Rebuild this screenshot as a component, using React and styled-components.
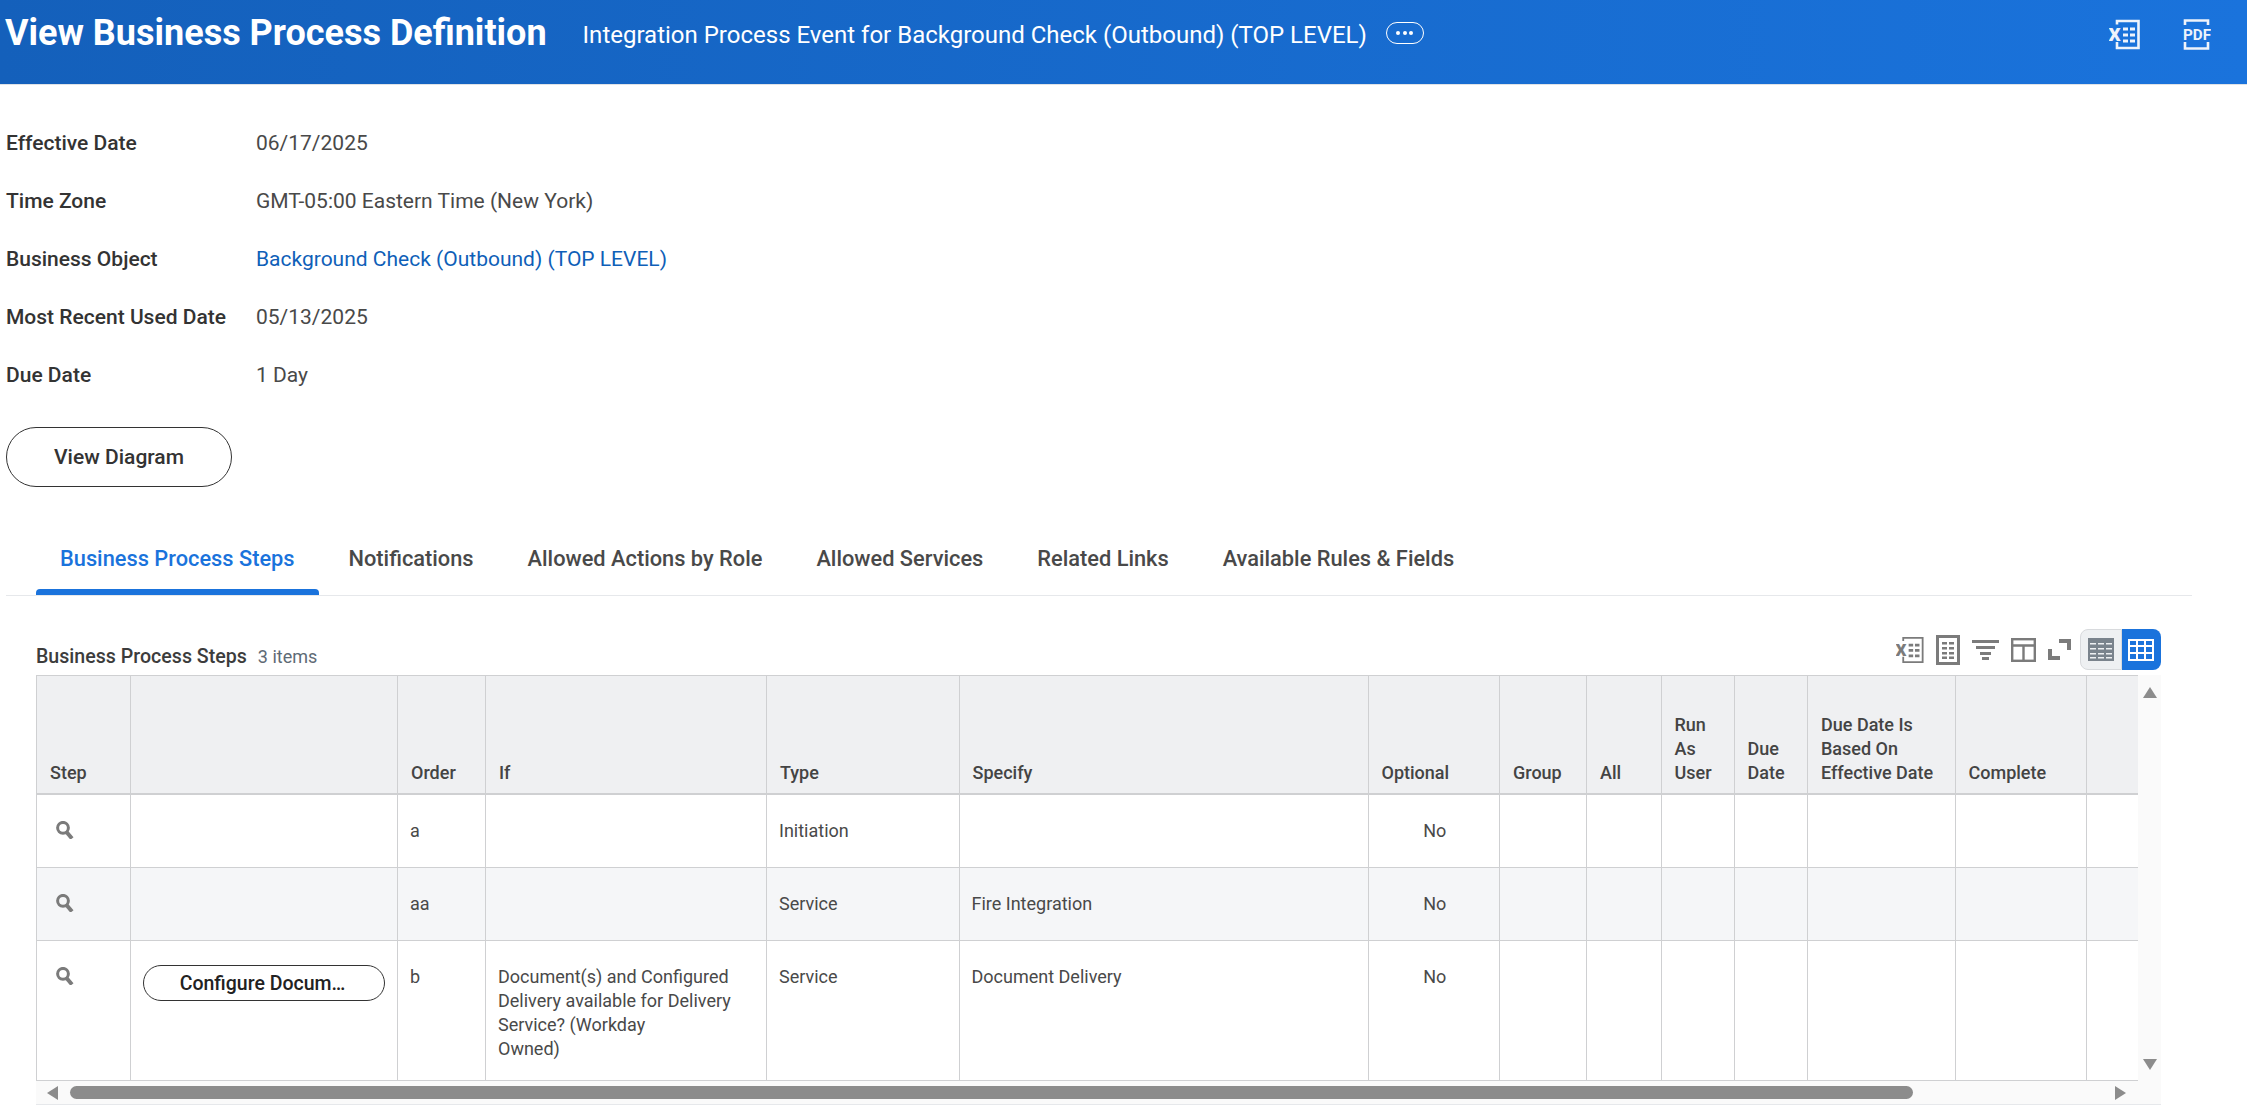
import styled, { createGlobalStyle } from "styled-components";

const GlobalStyle = createGlobalStyle`
  html, body {
    margin: 0;
    padding: 0;
    background: #fff;
    overflow: hidden;
  }
  body {
    font-family: Roboto, "Liberation Sans", sans-serif;
    color: #333;
  }
`;

const columns = [94, 267, 88, 281, 192.5, 409, 131.5, 87, 74.5, 73, 73.5, 147.5, 131.5, 120];

const headers = [
  "Step",
  "",
  "Order",
  "If",
  "Type",
  "Specify",
  "Optional",
  "Group",
  "All",
  <>Run<br />As<br />User</>,
  <>Due<br />Date</>,
  <>Due Date Is<br />Based On<br />Effective Date</>,
  "Complete",
  "",
];

const rows = [
  { order: "a", type: "Initiation", specify: "", rowHeight: 74 },
  { order: "aa", type: "Service", specify: "Fire Integration", rowHeight: 73, striped: true },
  {
    order: "b",
    type: "Service",
    specify: "Document Delivery",
    rowHeight: 140,
    button: "Configure Docum…",
    condition: (
      <>
        Document(s) and Configured<br />
        Delivery available for Delivery<br />
        Service? (Workday<br />
        Owned)
      </>
    ),
  },
];

const tabs = [
  "Business Process Steps",
  "Notifications",
  "Allowed Actions by Role",
  "Allowed Services",
  "Related Links",
  "Available Rules & Fields",
];

const ExcelIcon = ({ color, size = 30, stroke = 2.6 }) => (
  <svg width={size} height={size} viewBox="0 0 31 30" fill="none">
    <path d="M8 5V1.500h21.500v27H8v-6" stroke={color} strokeWidth={stroke} />
    <text x="-0.500" y="21.500" fontFamily="Roboto, sans-serif" fontWeight="900" fontSize="19" fill={color}>X</text>
    <path d="M14 8h5v3h-5zM21 8h5v3h-5zM14 14h5v3h-5zM21 14h5v3h-5zM14 20h5v3h-5zM21 20h5v3h-5z" fill={color} />
  </svg>
);

const PdfIcon = () => (
  <svg width="28" height="31" viewBox="0 0 28 31" fill="none">
    <path d="M2 6V1.500h23V6M2 23v6.500h23V23" stroke="#eef3fb" strokeWidth="2.600" />
    <text x="0" y="20.500" fontFamily="Roboto, sans-serif" fontWeight="700" fontSize="15" textLength="28" lengthAdjust="spacingAndGlyphs" fill="#eef3fb">PDF</text>
  </svg>
);

const ListIcon = () => (
  <svg width="24" height="30" viewBox="0 0 24 30" fill="none">
    <rect x="1.500" y="1.500" width="21" height="27" stroke="#7b7b7b" strokeWidth="3" />
    <path d="M6 7h5v2.500H6zM13 7h5v2.500h-5zM6 12h5v2.500H6zM13 12h5v2.500h-5zM6 17h5v2.500H6zM13 17h5v2.500h-5zM6 21.500h5V24H6zM13 21.500h5V24h-5z" fill="#7b7b7b" />
  </svg>
);

const FilterIcon = () => (
  <svg width="27" height="20" viewBox="0 0 27 20" fill="#7b7b7b">
    <rect x="0" y="0" width="27" height="3" />
    <rect x="4" y="6" width="19" height="3" />
    <rect x="8" y="12" width="11" height="3" />
    <rect x="10" y="17" width="7" height="3" />
  </svg>
);

const ColumnsIcon = () => (
  <svg width="25" height="24" viewBox="0 0 25 24" fill="none" stroke="#7b7b7b" strokeWidth="2.400">
    <rect x="1.200" y="1.200" width="22.600" height="21.600" />
    <path d="M1 7.500h23M12.500 7.500V23" />
  </svg>
);

const ExpandIcon = () => (
  <svg width="23" height="21" viewBox="0 0 23 21" fill="#7b7b7b">
    <path d="M11 0h12v11h-4V4h-8zM0 10h4v7h8v4H0z" />
  </svg>
);

const GridDenseIcon = () => (
  <svg width="26" height="23" viewBox="0 0 26 23">
    <rect width="26" height="23" fill="#7a838c" />
    <path d="M2 5h6v1.500H2zM10 5h6v1.500h-6zM18 5h6v1.500h-6zM2 10h6v1.500H2zM10 10h6v1.500h-6zM18 10h6v1.500h-6zM2 15h6v1.500H2zM10 15h6v1.500h-6zM18 15h6v1.500h-6zM2 19h6v1.500H2zM10 19h6v1.500h-6zM18 19h6v1.500h-6z" fill="#eef0f2" />
  </svg>
);

const GridIcon = () => (
  <svg width="26" height="22" viewBox="0 0 26 22" fill="none" stroke="#fff" strokeWidth="2">
    <rect x="1" y="1" width="24" height="20" />
    <path d="M1 7h24M1 14h24M9 1v20M17 1v20" />
  </svg>
);

const SearchIcon = () => (
  <svg width="18" height="18" viewBox="0 0 18 18" fill="none" stroke="#7b7b7b">
    <circle cx="7" cy="6.800" r="5.400" strokeWidth="3" />
    <path d="M10.500 11l5.500 6.500" strokeWidth="4" />
  </svg>
);

const Arrow = styled.span`
  display: block;
  width: 0;
  height: 0;
  border-style: solid;
  border-color: transparent;
  ${(p) => p.$dir === "up" && "border-width: 0 7px 11px; border-bottom-color: #8c8c8c;"}
  ${(p) => p.$dir === "down" && "border-width: 11px 7px 0; border-top-color: #8c8c8c;"}
  ${(p) => p.$dir === "left" && "border-width: 7px 11px 7px 0; border-right-color: #8c8c8c;"}
  ${(p) => p.$dir === "right" && "border-width: 7px 0 7px 11px; border-left-color: #8c8c8c;"}
`;

const Header = styled.header`
  box-sizing: border-box;
  height: 85px;
  display: flex;
  align-items: flex-start;
  padding: 12px 36px 0 5px;
  color: #fff;
  background: linear-gradient(to right, #1460bb, #1a73dc);
  border-bottom: 1px solid #dfe2e6;
`;

const PageTitle = styled.h1`
  margin: 0;
  font-size: 36px;
  line-height: 42px;
  font-weight: 700;
`;

const Subtitle = styled.div`
  margin: 4px 0 0 36px;
  font-size: 24px;
  line-height: 38px;
`;

const MoreButton = styled.div`
  box-sizing: border-box;
  width: 38px;
  height: 22px;
  margin: 10px 0 0 19px;
  display: flex;
  align-items: center;
  justify-content: center;
  gap: 2.500px;
  border: 1.500px solid #fff;
  border-radius: 11px;
  span {
    width: 4px;
    height: 4px;
    border-radius: 50%;
    background: #fff;
  }
`;

const HeaderActions = styled.div`
  margin: 7px 0 0 auto;
  display: flex;
  align-items: flex-start;
  gap: 43px;
`;

const Details = styled.dl`
  margin: 29px 0 0 6px;
  display: grid;
  grid-template-columns: 250px auto;
  grid-auto-rows: 58px;
  justify-content: start;
  align-items: center;
  font-size: 21px;
  line-height: 28px;
`;

const Label = styled.dt`
  font-weight: 500;
  color: #333;
`;

const Value = styled.dd`
  margin: 0;
  color: ${(p) => (p.$link ? "#0f5fb8" : "#494949")};
`;

const OutlineButton = styled.button`
  box-sizing: border-box;
  display: block;
  width: 226px;
  height: 60px;
  margin: 23px 0 0 6px;
  padding: 0;
  background: #fff;
  border: 1.500px solid #333;
  border-radius: 30px;
  font-family: inherit;
  font-size: 21px;
  font-weight: 500;
  color: #333;
`;

const TabBar = styled.nav`
  width: 2186px;
  height: 109px;
  box-sizing: border-box;
  margin-left: 6px;
  padding: 0 0 0 30px;
  display: flex;
  align-items: flex-end;
  border-bottom: 1.500px solid #e6e8eb;
`;

const Tab = styled.div`
  box-sizing: border-box;
  height: 50px;
  padding: 0 24px;
  margin-right: 6px;
  display: flex;
  flex-direction: column;
  justify-content: space-between;
  font-size: 21.800px;
  line-height: 28px;
  font-weight: 500;
  white-space: nowrap;
  color: ${(p) => (p.$active ? "#1a73dc" : "#494949")};
  ${(p) =>
    p.$active &&
    `
    &::after {
      content: "";
      height: 6px;
      margin: 0 -24px;
      background: #1a73dc;
      border-radius: 4px 4px 0 0;
    }
  `}
`;

const TableSection = styled.section`
  width: 2125px;
  margin-left: 36px;
`;

const TableToolbar = styled.div`
  height: 79px;
  display: flex;
  align-items: flex-end;
`;

const TableTitle = styled.div`
  margin-bottom: 5px;
  font-size: 19.600px;
  line-height: 26px;
  font-weight: 500;
  color: #3c3c3c;
`;

const ItemCount = styled.span`
  margin-left: 11px;
  font-size: 18px;
  font-weight: 400;
  color: #5e6a75;
`;

const Tools = styled.div`
  margin: 0 0 5px auto;
  display: flex;
  align-items: center;
  gap: 12px;
`;

const ViewToggle = styled.div`
  display: flex;
  width: 81px;
  height: 41px;
  margin-left: -3px;
`;

const ToggleSide = styled.div`
  flex: 1;
  box-sizing: border-box;
  display: flex;
  align-items: center;
  justify-content: center;
  background: ${(p) => (p.$active ? "#1a73dc" : "#eef0f2")};
  border: ${(p) => (p.$active ? "none" : "1px solid #d8dadd")};
  border-radius: ${(p) => (p.$active ? "0 8px 8px 0" : "8px 0 0 8px")};
`;

const Frame = styled.div`
  display: grid;
  grid-template-columns: 2102px 23px;
  grid-template-rows: 405px 24px;
  background: #fafafa;
  border-bottom: 1.500px solid #e6e8eb;
`;

const TableViewport = styled.div`
  overflow: hidden;
  background: #fff;
`;

const Table = styled.table`
  table-layout: fixed;
  width: 2169.500px;
  border-collapse: collapse;
  font-size: 18px;
  line-height: 24px;
  color: #494949;
`;

const Th = styled.th`
  box-sizing: border-box;
  height: 118px;
  padding: 0 10px 8px 13px;
  background: #eff0f2;
  border: 1.500px solid #cfd0d2;
  border-bottom-width: 2px;
  vertical-align: bottom;
  text-align: left;
  font-weight: 500;
  color: #444;
`;

const Tr = styled.tr`
  background: ${(p) => (p.$striped ? "#f5f6f8" : "#fff")};
`;

const Td = styled.td`
  box-sizing: border-box;
  height: ${(p) => p.$rowHeight}px;
  padding: 24px 10px 0 12px;
  border: 1.500px solid #cfd0d2;
  vertical-align: top;
  text-align: ${(p) => (p.$center ? "center" : "left")};
`;

const StepIcon = styled.div`
  height: 18px;
  padding-left: 7px;
  margin-top: 2px;
`;

const RowButton = styled.button`
  box-sizing: border-box;
  display: block;
  width: 242px;
  height: 36px;
  margin: 0;
  padding: 0 3px 0 0;
  background: #fff;
  border: 1.500px solid #333;
  border-radius: 18px;
  font-family: inherit;
  font-size: 19.500px;
  font-weight: 500;
  color: #222;
`;

const VerticalBar = styled.div`
  display: flex;
  flex-direction: column;
  align-items: center;
  justify-content: space-between;
  padding: 12px 0 10px;
`;

const HorizontalBar = styled.div`
  display: flex;
  align-items: center;
  padding: 0 12px 0 11px;
  border-top: 1.500px solid #cfd0d2;
`;

const Thumb = styled.div`
  width: 1843px;
  height: 13px;
  margin: 0 auto 0 12px;
  background: #8c8c8c;
  border-radius: 7px;
`;

export default function App() {
  return (
    <>
      <GlobalStyle />
      <Header>
        <PageTitle>View Business Process Definition</PageTitle>
        <Subtitle>Integration Process Event for Background Check (Outbound) (TOP LEVEL)</Subtitle>
        <MoreButton><span /><span /><span /></MoreButton>
        <HeaderActions>
          <ExcelIcon color="#eef3fb" size={31} />
          <PdfIcon />
        </HeaderActions>
      </Header>

      <Details>
        <Label>Effective Date</Label>
        <Value>06/17/2025</Value>
        <Label>Time Zone</Label>
        <Value>GMT-05:00 Eastern Time (New York)</Value>
        <Label>Business Object</Label>
        <Value $link>Background Check (Outbound) (TOP LEVEL)</Value>
        <Label>Most Recent Used Date</Label>
        <Value>05/13/2025</Value>
        <Label>Due Date</Label>
        <Value>1 Day</Value>
      </Details>

      <OutlineButton>View Diagram</OutlineButton>

      <TabBar>
        {tabs.map((tab, i) => (
          <Tab key={tab} $active={i === 0}>{tab}</Tab>
        ))}
      </TabBar>

      <TableSection>
        <TableToolbar>
          <TableTitle>
            Business Process Steps
            <ItemCount>3 items</ItemCount>
          </TableTitle>
          <Tools>
            <ExcelIcon color="#7b7b7b" size={28} stroke={2} />
            <ListIcon />
            <FilterIcon />
            <ColumnsIcon />
            <ExpandIcon />
            <ViewToggle>
              <ToggleSide><GridDenseIcon /></ToggleSide>
              <ToggleSide $active><GridIcon /></ToggleSide>
            </ViewToggle>
          </Tools>
        </TableToolbar>

        <Frame>
          <TableViewport>
            <Table>
              <colgroup>
                {columns.map((w, i) => <col key={i} width={w} />)}
              </colgroup>
              <thead>
                <tr>
                  {headers.map((h, i) => <Th key={i}>{h}</Th>)}
                </tr>
              </thead>
              <tbody>
                {rows.map((row) => (
                  <Tr key={row.order} $striped={row.striped}>
                    <Td $rowHeight={row.rowHeight}><StepIcon><SearchIcon /></StepIcon></Td>
                    <Td $rowHeight={row.rowHeight}>
                      {row.button && <RowButton>{row.button}</RowButton>}
                    </Td>
                    <Td $rowHeight={row.rowHeight}>{row.order}</Td>
                    <Td $rowHeight={row.rowHeight}>{row.condition}</Td>
                    <Td $rowHeight={row.rowHeight}>{row.type}</Td>
                    <Td $rowHeight={row.rowHeight}>{row.specify}</Td>
                    <Td $rowHeight={row.rowHeight} $center>No</Td>
                    {columns.slice(7).map((_, i) => <Td key={i} $rowHeight={row.rowHeight} />)}
                  </Tr>
                ))}
              </tbody>
            </Table>
          </TableViewport>
          <VerticalBar>
            <Arrow $dir="up" />
            <Arrow $dir="down" />
          </VerticalBar>
          <HorizontalBar>
            <Arrow $dir="left" />
            <Thumb />
            <Arrow $dir="right" />
          </HorizontalBar>
        </Frame>
      </TableSection>
    </>
  );
}
